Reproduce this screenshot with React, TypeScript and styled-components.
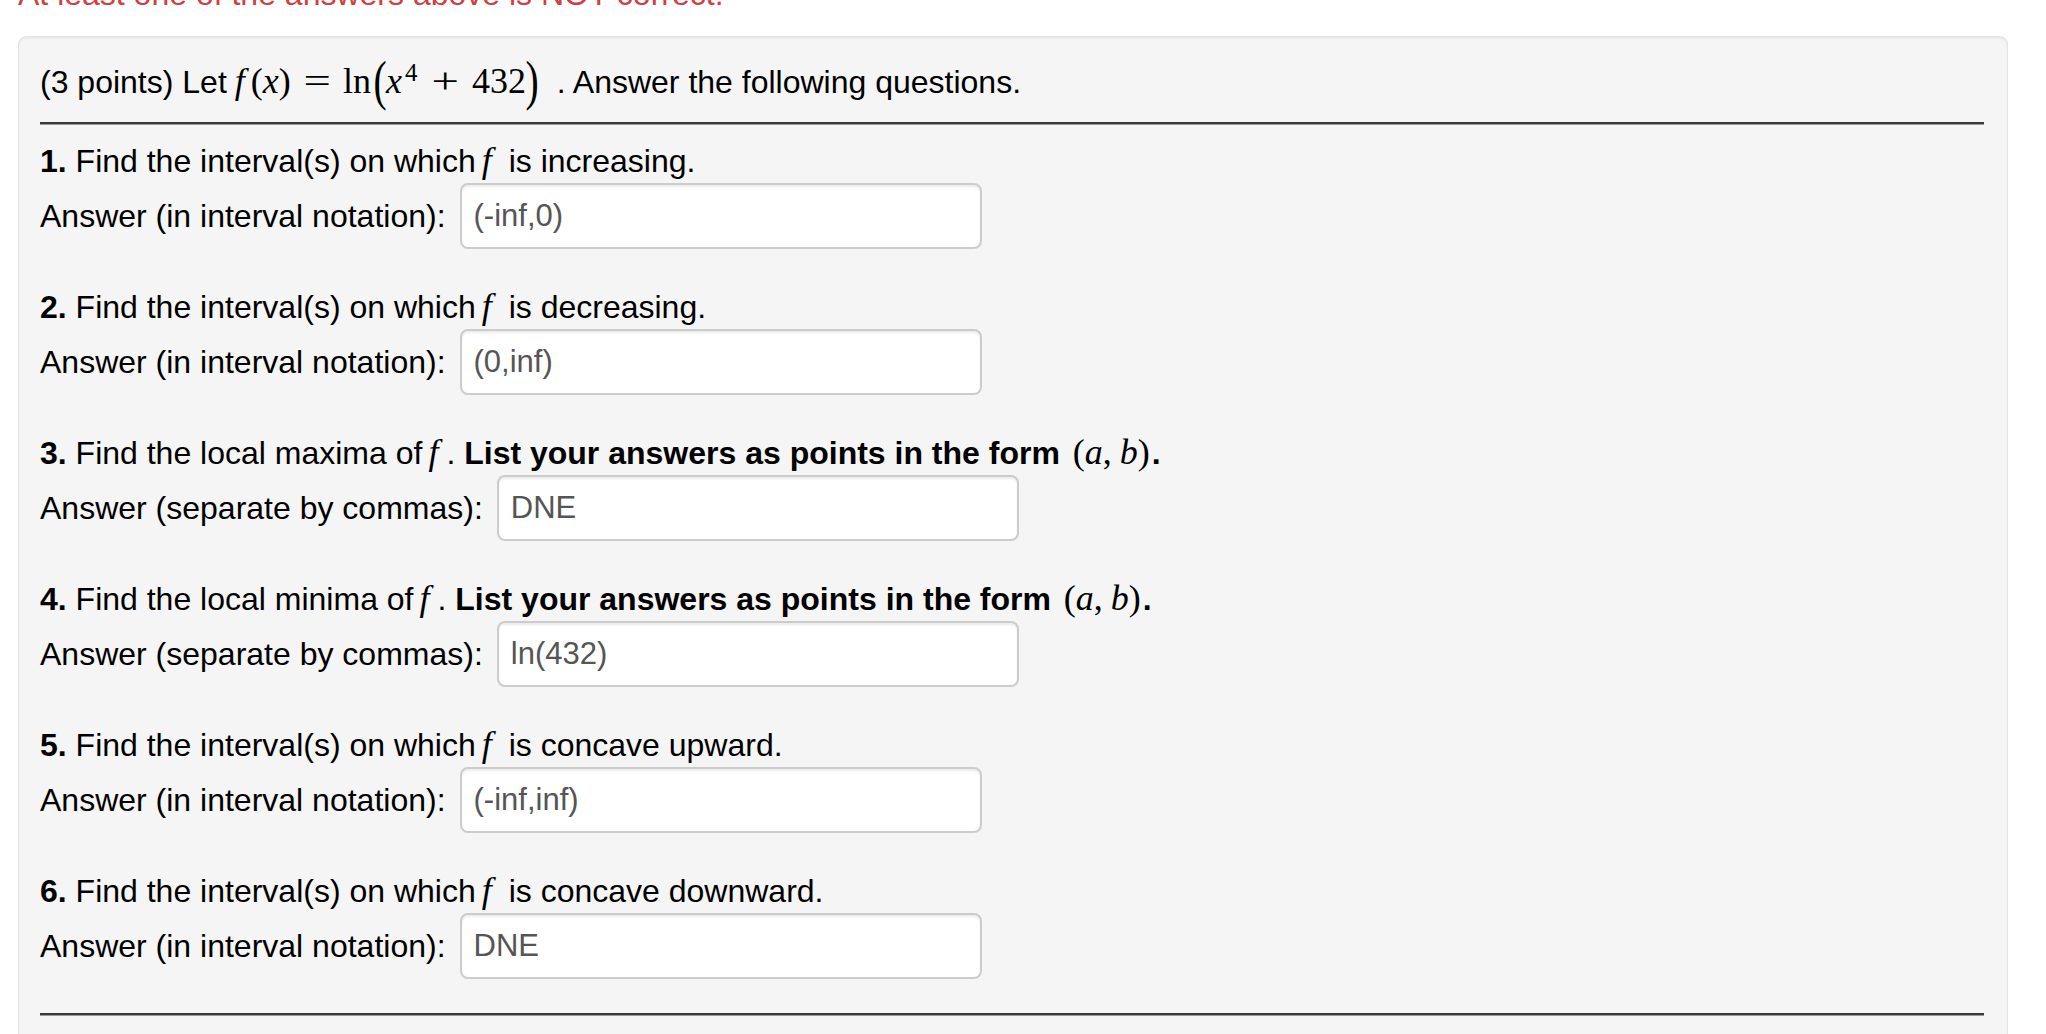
import React from "react";
import styled, { createGlobalStyle } from "styled-components";

const GlobalStyle = createGlobalStyle`
  html, body {
    margin: 0;
    padding: 0;
    background: #ffffff;
    overflow: hidden;
  }
  body {
    font-family: "Liberation Sans", Arial, Helvetica, sans-serif;
    color: #000;
  }
`;

const Page = styled.div`
  padding: 0 38px 0 18px;
`;

const ErrorNote = styled.div`
  margin-top: -24px;
  height: 36px;
  font-size: 32px;
  line-height: 36px;
  color: #d04040;
  white-space: nowrap;
`;

const Well = styled.div`
  margin-top: 24px;
  min-height: 1040px;
  box-sizing: border-box;
  padding: 25px 23px 40px 21px;
  background: #f5f5f5;
  border: 1px solid #e3e3e3;
  border-radius: 8px;
  box-shadow: inset 0 2px 2px rgba(0, 0, 0, 0.05);
`;

const TextLine = styled.div`
  height: 40px;
  font-size: 32px;
  line-height: 40px;
  white-space: nowrap;
`;

const Rule = styled.hr<{ $top: number }>`
  margin: ${(p) => p.$top}px 0 0;
  height: 0;
  border: 0;
  border-top: 2px solid #3a3a3a;
  border-bottom: 1px solid #9a9a9a;
`;

const QuestionList = styled.div`
  display: flex;
  flex-direction: column;
  gap: 38px;
  margin-top: 16px;
`;

const Question = styled.div`
  display: flex;
  flex-direction: column;
  gap: 2px;
`;

const AnswerRow = styled.div`
  display: flex;
  align-items: center;
  gap: 14px;
  height: 66px;
`;

const AnswerLabel = styled.span`
  font-size: 32px;
  line-height: 40px;
  white-space: nowrap;
`;

const AnswerBox = styled.input`
  width: 522px;
  height: 66px;
  box-sizing: border-box;
  margin: 0;
  padding: 0 12px;
  border: 2px solid #cccccc;
  border-radius: 8px;
  background: #ffffff;
  box-shadow: inset 0 2px 2px rgba(0, 0, 0, 0.075);
  font-family: "Liberation Sans", Arial, sans-serif;
  font-size: 31px;
  color: #555555;
  outline: none;
`;

/* math pieces, roughly MathJax-looking */
const Mi = styled.span<{ $l?: number; $r?: number }>`
  font-family: "Liberation Serif", "Times New Roman", serif;
  font-style: italic;
  font-size: 36px;
  line-height: 0;
  margin-left: ${(p) => p.$l ?? 0}px;
  margin-right: ${(p) => p.$r ?? 0}px;
`;

const Mn = styled.span<{ $l?: number; $r?: number }>`
  font-family: "Liberation Serif", "Times New Roman", serif;
  font-size: 36px;
  line-height: 0;
  margin-left: ${(p) => p.$l ?? 0}px;
  margin-right: ${(p) => p.$r ?? 0}px;
`;

const Mo = styled.span<{ $space: number }>`
  display: inline-block;
  font-family: "Liberation Serif", "Times New Roman", serif;
  font-size: 36px;
  line-height: 0;
  transform: scaleX(1.35);
  margin: 0 ${(p) => p.$space}px;
`;

const BigParen = styled.span<{ $l?: number; $r?: number }>`
  display: inline-block;
  font-family: "Liberation Serif", "Times New Roman", serif;
  font-size: 36px;
  line-height: 0;
  transform: scale(1.1, 1.5);
  transform-origin: 50% -24%;
  margin-left: ${(p) => p.$l ?? 0}px;
  margin-right: ${(p) => p.$r ?? 0}px;
`;

const Sup = styled.span`
  font-family: "Liberation Serif", "Times New Roman", serif;
  font-size: 25px;
  line-height: 0;
  vertical-align: 12px;
  margin-left: 3px;
`;

const F = () => (
  <Mi $l={6} $r={8}>
    f
  </Mi>
);

const Point = () => (
  <Mn $l={4} $r={2}>
    (<Mi>a</Mi>,<Mi $l={8}>b</Mi>)
  </Mn>
);

type Item = {
  n: number;
  prompt: React.ReactNode;
  label: string;
  value: string;
};

const items: Item[] = [
  {
    n: 1,
    prompt: (
      <>
        Find the interval(s) on which<F /> is increasing.
      </>
    ),
    label: "Answer (in interval notation):",
    value: "(-inf,0)",
  },
  {
    n: 2,
    prompt: (
      <>
        Find the interval(s) on which<F /> is decreasing.
      </>
    ),
    label: "Answer (in interval notation):",
    value: "(0,inf)",
  },
  {
    n: 3,
    prompt: (
      <>
        Find the local maxima of<F />. <b>List your answers as points in the form </b>
        <Point />
        <b>.</b>
      </>
    ),
    label: "Answer (separate by commas):",
    value: "DNE",
  },
  {
    n: 4,
    prompt: (
      <>
        Find the local minima of<F />. <b>List your answers as points in the form </b>
        <Point />
        <b>.</b>
      </>
    ),
    label: "Answer (separate by commas):",
    value: "ln(432)",
  },
  {
    n: 5,
    prompt: (
      <>
        Find the interval(s) on which<F /> is concave upward.
      </>
    ),
    label: "Answer (in interval notation):",
    value: "(-inf,inf)",
  },
  {
    n: 6,
    prompt: (
      <>
        Find the interval(s) on which<F /> is concave downward.
      </>
    ),
    label: "Answer (in interval notation):",
    value: "DNE",
  },
];

export default function App() {
  return (
    <Page>
      <GlobalStyle />
      <ErrorNote>At least one of the answers above is NOT correct.</ErrorNote>
      <Well>
        <TextLine>
          (3 points) Let
          <Mi $l={8} $r={6}>
            f
          </Mi>
          <Mn>(</Mn>
          <Mi>x</Mi>
          <Mn>)</Mn>
          <Mo $space={16}>=</Mo>
          <Mn>ln</Mn>
          <BigParen $l={3}>(</BigParen>
          <Mi>x</Mi>
          <Sup>4</Sup>
          <Mo $space={17}>+</Mo>
          <Mn>432</Mn>
          <BigParen $r={10}>)</BigParen> . Answer the following questions.
        </TextLine>
        <Rule $top={20} />
        <QuestionList>
          {items.map((q) => (
            <Question key={q.n}>
              <TextLine>
                <b>{q.n}.</b> {q.prompt}
              </TextLine>
              <AnswerRow>
                <AnswerLabel>{q.label}</AnswerLabel>
                <AnswerBox type="text" readOnly defaultValue={q.value} />
              </AnswerRow>
            </Question>
          ))}
        </QuestionList>
        <Rule $top={34} />
      </Well>
    </Page>
  );
}
